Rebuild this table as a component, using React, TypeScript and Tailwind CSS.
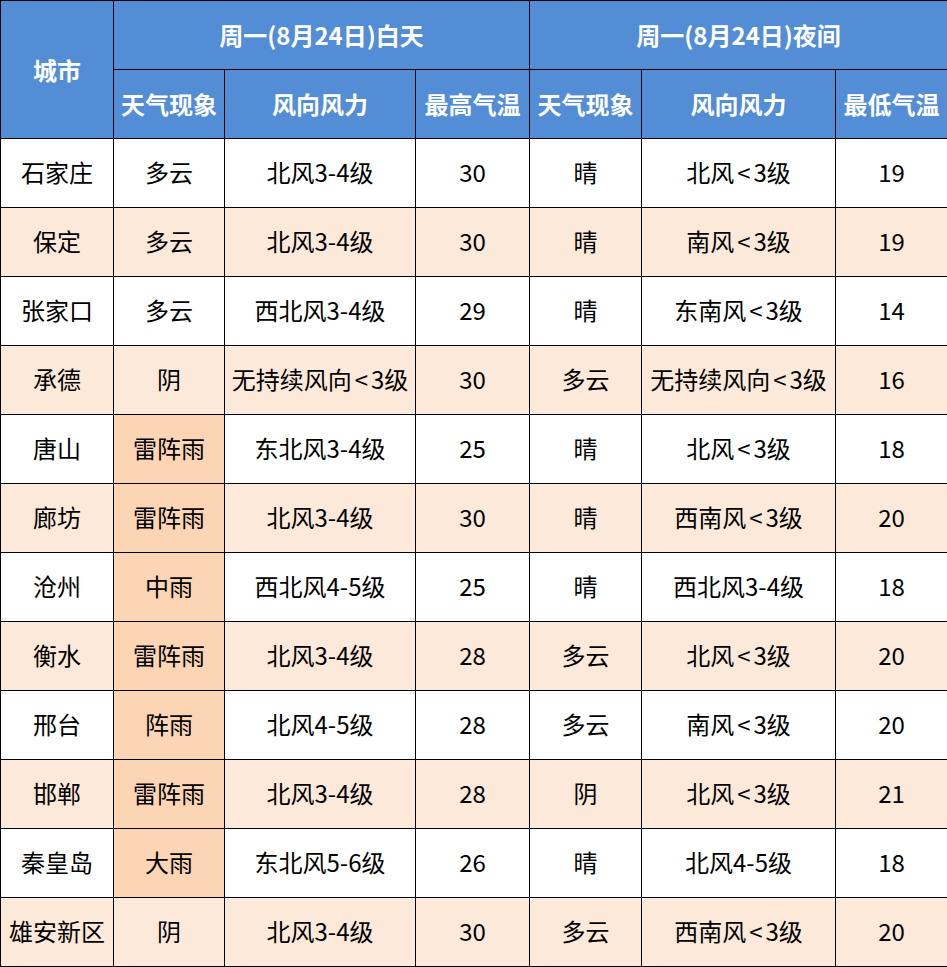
const rows: [string, string, string, string, string, string, string][] = [
  ["石家庄", "多云", "北风3-4级", "30", "晴", "北风<3级", "19"],
  ["保定", "多云", "北风3-4级", "30", "晴", "南风<3级", "19"],
  ["张家口", "多云", "西北风3-4级", "29", "晴", "东南风<3级", "14"],
  ["承德", "阴", "无持续风向<3级", "30", "多云", "无持续风向<3级", "16"],
  ["唐山", "雷阵雨", "东北风3-4级", "25", "晴", "北风<3级", "18"],
  ["廊坊", "雷阵雨", "北风3-4级", "30", "晴", "西南风<3级", "20"],
  ["沧州", "中雨", "西北风4-5级", "25", "晴", "西北风3-4级", "18"],
  ["衡水", "雷阵雨", "北风3-4级", "28", "多云", "北风<3级", "20"],
  ["邢台", "阵雨", "北风4-5级", "28", "多云", "南风<3级", "20"],
  ["邯郸", "雷阵雨", "北风3-4级", "28", "阴", "北风<3级", "21"],
  ["秦皇岛", "大雨", "东北风5-6级", "26", "晴", "北风4-5级", "18"],
  ["雄安新区", "阴", "北风3-4级", "30", "多云", "西南风<3级", "20"],
];

const rainy = ["雷阵雨", "中雨", "阵雨", "大雨"];

// the "<" in the original is set a little wider, so pad it on both sides
function Cell({ text }: { text: string }) {
  const parts = text.split("<");
  if (parts.length === 1) return <>{text}</>;
  return (
    <>
      {parts[0]}
      <span className="px-[3px]">&lt;</span>
      {parts[1]}
    </>
  );
}

export default function App() {
  return (
    <div
      className="w-[947px] bg-white"
      style={{ fontFamily: '"Noto Sans CJK SC", "Noto Sans", sans-serif' }}
    >
      <table className="w-[947px] table-fixed border-collapse text-center text-[24px] leading-none text-black">
        <colgroup>
          <col className="w-[113px]" />
          <col className="w-[111px]" />
          <col className="w-[191px]" />
          <col className="w-[114px]" />
          <col className="w-[112px]" />
          <col className="w-[194px]" />
          <col className="w-[112px]" />
        </colgroup>
        <thead className="bg-[#538dd5] font-bold text-white">
          <tr className="h-[69px]">
            <th rowSpan={2} className="border border-black">城市</th>
            <th colSpan={3} className="border border-black">周一(8月24日)白天</th>
            <th colSpan={3} className="border border-black">周一(8月24日)夜间</th>
          </tr>
          <tr className="h-[69px]">
            <th className="border border-black">天气现象</th>
            <th className="border border-black">风向风力</th>
            <th className="border border-black whitespace-nowrap">最高气温</th>
            <th className="border border-black">天气现象</th>
            <th className="border border-black">风向风力</th>
            <th className="border border-black whitespace-nowrap">最低气温</th>
          </tr>
        </thead>
        <tbody>
          {rows.map((r, i) => (
            <tr key={r[0]} className={`h-[69px] ${i % 2 === 1 ? "bg-[#fde9d9]" : "bg-white"}`}>
              {r.map((c, j) => (
                <td
                  key={j}
                  className={`border border-black whitespace-nowrap pb-[2px] ${
                    j === 1 && rainy.includes(c) ? "bg-[#fcd5b4]" : ""
                  }`}
                >
                  <Cell text={c} />
                </td>
              ))}
            </tr>
          ))}
        </tbody>
      </table>
    </div>
  );
}
